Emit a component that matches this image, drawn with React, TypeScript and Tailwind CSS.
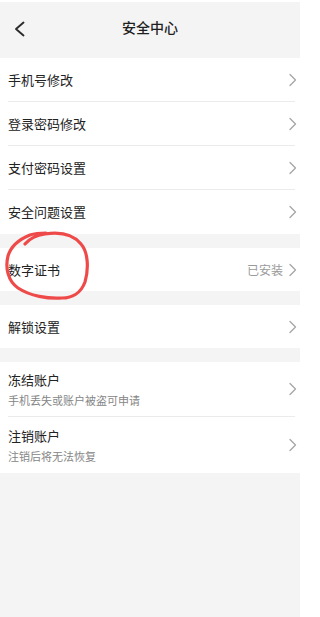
type Row = {
  title: string;
  sub?: string;
  extra?: string;
};

const font = { fontFamily: '"Noto Sans CJK SC", "Noto Sans", sans-serif' };

function Arrow() {
  return (
    <svg className="w-[10px] h-[14px] shrink-0 -mr-[3px]" viewBox="0 0 10 14" fill="none">
      <polyline points="2,1.5 7.5,7 2,12.5" stroke="#a6a6a6" strokeWidth={1.3} strokeLinecap="round" strokeLinejoin="round" />
    </svg>
  );
}

function SimpleRow({ row, divider, h }: { row: Row; divider?: boolean; h: string }) {
  return (
    <div className={`${h} bg-white pl-[8px] pr-[5px] flex flex-col`}>
      <div className={`flex-1 flex items-center justify-between ${divider ? 'border-b border-[#ebebeb]' : ''}`}>
        <div className="flex flex-col">
          <span className="text-[13px] leading-[18px] text-[#222]">{row.title}</span>
          {row.sub && <span className="text-[11px] leading-[16px] text-[#858585] mt-[3px]">{row.sub}</span>}
        </div>
        <div className="flex items-center gap-[5px]">
          {row.extra && <span className="text-[12px] text-[#9a9a9a]">{row.extra}</span>}
          <Arrow />
        </div>
      </div>
    </div>
  );
}

const group1: Row[] = [
  { title: '手机号修改' },
  { title: '登录密码修改' },
  { title: '支付密码设置' },
  { title: '安全问题设置' },
];

export default function App() {
  return (
    <div className="relative w-[300px] h-[617px] bg-[#f4f4f4] overflow-hidden" style={font}>
      {/* Header */}
      <div className="h-[2px] bg-white" />
      <div className="h-[56px] relative flex items-center justify-center">
        <svg className="absolute left-[13px] top-[19px] w-[14px] h-[16px]" viewBox="0 0 14 16" fill="none">
          <polyline points="10.5,1.5 3,8 10.5,14.5" stroke="#2b2b2b" strokeWidth={1.9} strokeLinecap="round" strokeLinejoin="round" />
        </svg>
        <span className="text-[14px] font-medium text-[#1f1f1f] -mt-[6px]">安全中心</span>
      </div>

      {/* Group 1 */}
      <div>
        {group1.map((r, i) => (
          <SimpleRow key={r.title} row={r} divider={i < group1.length - 1} h="h-[44px]" />
        ))}
      </div>

      <div className="h-[14px]" />
      <SimpleRow row={{ title: '数字证书', extra: '已安装' }} h="h-[43px]" />

      <div className="h-[14px]" />
      <SimpleRow row={{ title: '解锁设置' }} h="h-[43px]" />

      <div className="h-[14px]" />
      <SimpleRow row={{ title: '冻结账户', sub: '手机丢失或账户被盗可申请' }} divider h="h-[55px]" />
      <SimpleRow row={{ title: '注销账户', sub: '注销后将无法恢复' }} h="h-[56px]" />

      {/* Hand-drawn red circle annotation */}
      <svg
        className="absolute left-0 top-[220px] w-[100px] h-[85px] pointer-events-none"
        viewBox="0 220 100 85"
        fill="none"
      >
        <path
          d="M25 244 C30 238 38 235 45 234 C58 232 72 233 81 244 C88 252 89 268 85 282 C81 293 72 298 62 298 C48 299 30 296 18 288 C8 281 5 268 8 256 C11 246 20 239 30 235 C36 233 42 233 46 233"
          stroke="#ef4a4a"
          strokeWidth={3.2}
          strokeLinecap="round"
          strokeLinejoin="round"
        />
      </svg>
    </div>
  );
}
